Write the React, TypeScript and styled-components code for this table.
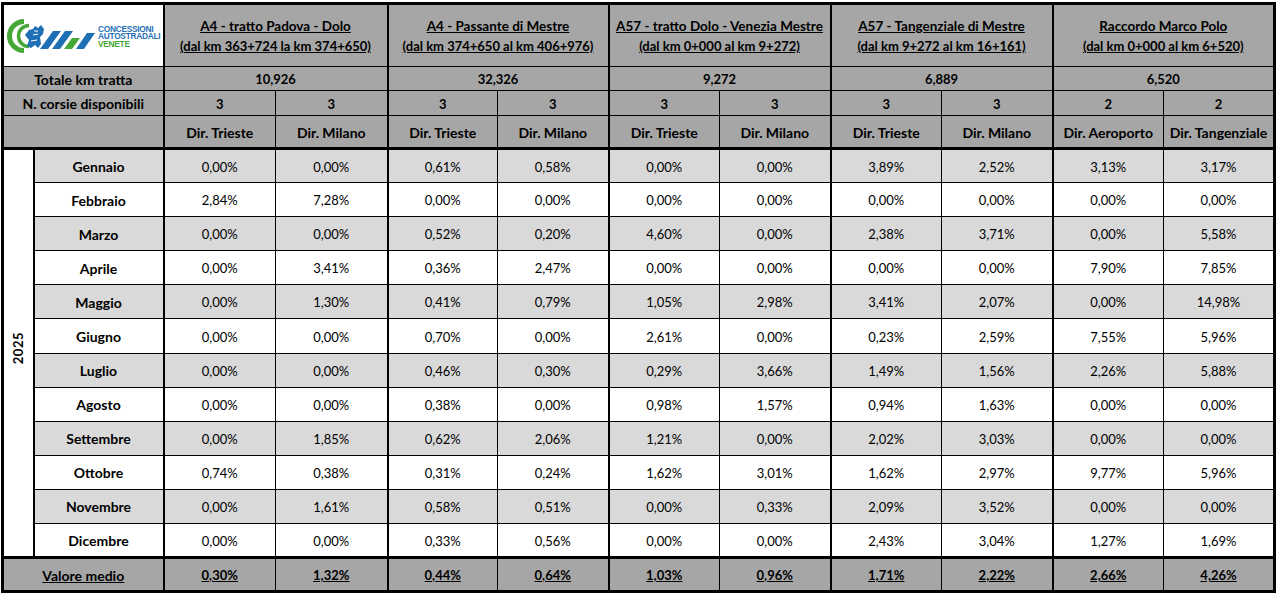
import React from "react";
import styled, { createGlobalStyle } from "styled-components";

const HEAD = "#a6a6a6";
const BAND = "#d9d9d9";
const BLUE = "#1f6fb5";
const GREEN = "#45a836";

const GlobalStyle = createGlobalStyle`
  body {
    margin: 0;
    background: #fff;
  }
`;

const Sheet = styled.table`
  border-collapse: collapse;
  table-layout: fixed;
  width: 1275px;
  margin: 2px 0 0 1px;
  border: 3px solid #000;
  font-family: Lato, "Liberation Sans", sans-serif;
  font-size: 13px;
  color: #000;
`;

const Col = styled.col<{ $w: number }>`
  width: ${p => p.$w}px;
`;

const Row = styled.tr<{ $h: number }>`
  height: ${p => p.$h}px;
`;

const Cell = styled.td<{
  $bg?: string;
  $bold?: boolean;
  $label?: boolean;
  $under?: boolean;
  $edge?: boolean;
  $lead?: boolean;
  $base?: boolean;
  $top?: boolean;
}>`
  padding: 1px 0 0;
  border: 1px solid #000;
  border-right-width: ${p => (p.$edge ? 2 : 1)}px;
  border-left-width: ${p => (p.$lead ? 2 : 1)}px;
  border-bottom-width: ${p => (p.$base ? 3 : 1)}px;
  border-top-width: ${p => (p.$top ? 3 : 1)}px;
  background: ${p => p.$bg ?? "#fff"};
  text-align: center;
  vertical-align: middle;
  font-size: ${p => (p.$label ? 14 : 13)}px;
  font-weight: ${p => (p.$bold || p.$label ? 700 : 400)};
  text-decoration: ${p => (p.$under ? "underline" : "none")};
  white-space: nowrap;
  overflow: hidden;
`;

const Title = styled.div<{ $wide?: boolean }>`
  font-size: ${p => (p.$wide ? 13.5 : 13)}px;
  font-weight: 700;
  line-height: 20px;
  text-decoration: underline;
`;

const YearLabel = styled.span`
  display: inline-block;
  writing-mode: vertical-rl;
  transform: rotate(180deg);
  font-weight: 700;
  letter-spacing: 0.5px;
  margin-bottom: 8px;
`;

const Brand = styled.div`
  display: flex;
  align-items: center;
  gap: 3px;
  padding: 0 0 0 3px;

  svg {
    flex-shrink: 0;
  }
`;

const BrandText = styled.div`
  display: flex;
  flex-direction: column;
  align-items: flex-start;
  font-family: "Liberation Sans", Arial, sans-serif;
  font-weight: 700;
  font-size: 8.3px;
  line-height: 7.6px;
  letter-spacing: -0.25px;
  padding-top: 2px;
`;

const BrandLine = styled.span<{ $green?: boolean }>`
  color: ${p => (p.$green ? GREEN : BLUE)};
`;

const Logo = () => (
  <Brand>
    <svg width="88" height="34" viewBox="0 0 88 34">
      <path d="M17 2.5 A14.5 14.5 0 0 0 17 31.5" stroke={GREEN} strokeWidth="5" fill="none" />
      <path d="M22 6.5 A10.5 10.5 0 0 0 22 27.5" stroke={GREEN} strokeWidth="3.5" fill="none" />
      <path
        d="M18 16 L22 11 L26 10 L28 7 L31 9 L34 6 L37 10 L36 15 L33 18 L34 25 L31 29 L28 26 L24 29 L20 27 L22 21 Z"
        fill={BLUE}
      />
      <path d="M27 12 L31 12 M26 16 L31 15 M24 22 L30 21" stroke="#fff" strokeWidth="1" />
      <polygon points="33,30 41,30 54,12 46,12" fill={BLUE} />
      <polygon points="45,30 53,30 66,12 58,12" fill={BLUE} />
      <polygon points="57,30 65,30 73,19 65,19" fill={GREEN} />
      <polygon points="69,30 77,30 88,14 80,14" fill={BLUE} />
    </svg>
    <BrandText>
      <BrandLine>CONCESSIONI</BrandLine>
      <BrandLine>AUTOSTRADALI</BrandLine>
      <BrandLine $green>VENETE</BrandLine>
    </BrandText>
  </Brand>
);

const widths = [31, 130, 112, 112, 110, 111, 111, 111, 111, 111, 111, 111];

const sections = [
  { name: "A4 - tratto Padova - Dolo", range: "(dal km 363+724 la km 374+650)", km: "10,926", lanes: ["3", "3"], dirs: ["Dir. Trieste", "Dir. Milano"] },
  { name: "A4 - Passante di Mestre", range: "(dal km 374+650 al km 406+976)", km: "32,326", lanes: ["3", "3"], dirs: ["Dir. Trieste", "Dir. Milano"] },
  { name: "A57 - tratto Dolo - Venezia Mestre", range: "(dal km 0+000 al km 9+272)", km: "9,272", lanes: ["3", "3"], dirs: ["Dir. Trieste", "Dir. Milano"] },
  { name: "A57 - Tangenziale di Mestre", range: "(dal km 9+272 al km 16+161)", km: "6,889", lanes: ["3", "3"], dirs: ["Dir. Trieste", "Dir. Milano"] },
  { name: "Raccordo Marco Polo", range: "(dal km 0+000 al km 6+520)", km: "6,520", lanes: ["2", "2"], dirs: ["Dir. Aeroporto", "Dir. Tangenziale"] },
];

const months: [string, string[]][] = [
  ["Gennaio", ["0,00", "0,00", "0,61", "0,58", "0,00", "0,00", "3,89", "2,52", "3,13", "3,17"]],
  ["Febbraio", ["2,84", "7,28", "0,00", "0,00", "0,00", "0,00", "0,00", "0,00", "0,00", "0,00"]],
  ["Marzo", ["0,00", "0,00", "0,52", "0,20", "4,60", "0,00", "2,38", "3,71", "0,00", "5,58"]],
  ["Aprile", ["0,00", "3,41", "0,36", "2,47", "0,00", "0,00", "0,00", "0,00", "7,90", "7,85"]],
  ["Maggio", ["0,00", "1,30", "0,41", "0,79", "1,05", "2,98", "3,41", "2,07", "0,00", "14,98"]],
  ["Giugno", ["0,00", "0,00", "0,70", "0,00", "2,61", "0,00", "0,23", "2,59", "7,55", "5,96"]],
  ["Luglio", ["0,00", "0,00", "0,46", "0,30", "0,29", "3,66", "1,49", "1,56", "2,26", "5,88"]],
  ["Agosto", ["0,00", "0,00", "0,38", "0,00", "0,98", "1,57", "0,94", "1,63", "0,00", "0,00"]],
  ["Settembre", ["0,00", "1,85", "0,62", "2,06", "1,21", "0,00", "2,02", "3,03", "0,00", "0,00"]],
  ["Ottobre", ["0,74", "0,38", "0,31", "0,24", "1,62", "3,01", "1,62", "2,97", "9,77", "5,96"]],
  ["Novembre", ["0,00", "1,61", "0,58", "0,51", "0,00", "0,33", "2,09", "3,52", "0,00", "0,00"]],
  ["Dicembre", ["0,00", "0,00", "0,33", "0,56", "0,00", "0,00", "2,43", "3,04", "1,27", "1,69"]],
];

const averages = ["0,30", "1,32", "0,44", "0,64", "1,03", "0,96", "1,71", "2,22", "2,66", "4,26"];

export default function App() {
  return (
    <>
      <GlobalStyle />
      <Sheet>
        <colgroup>
          {widths.map((w, i) => (
            <Col key={i} $w={w} />
          ))}
        </colgroup>
        <tbody>
          <Row $h={63}>
            <Cell colSpan={2} $edge>
              <Logo />
            </Cell>
            {sections.map(s => (
              <Cell key={s.name} colSpan={2} $bg={HEAD} $edge $lead>
                <Title $wide>{s.name}</Title>
                <Title>{s.range}</Title>
              </Cell>
            ))}
          </Row>
          <Row $h={24}>
            <Cell colSpan={2} $bg={HEAD} $label $edge>
              Totale km tratta
            </Cell>
            {sections.map(s => (
              <Cell key={s.name} colSpan={2} $bg={HEAD} $bold $edge>
                {s.km}
              </Cell>
            ))}
          </Row>
          <Row $h={25}>
            <Cell colSpan={2} $bg={HEAD} $label $edge>
              N. corsie disponibili
            </Cell>
            {sections.flatMap(s =>
              s.lanes.map((l, j) => (
                <Cell key={s.name + j} $bg={HEAD} $bold $edge={j === 1}>
                  {l}
                </Cell>
              ))
            )}
          </Row>
          <Row $h={33}>
            <Cell colSpan={2} $bg={HEAD} $edge $base />
            {sections.flatMap(s =>
              s.dirs.map((d, j) => (
                <Cell key={s.name + d} $bg={HEAD} $label $edge={j === 1} $base>
                  {d}
                </Cell>
              ))
            )}
          </Row>
          {months.map(([name, values], i) => {
            const bg = i % 2 === 0 ? BAND : "#fff";
            return (
              <Row key={name} $h={34.1}>
                {i === 0 && (
                  <Cell rowSpan={12} $edge>
                    <YearLabel>2025</YearLabel>
                  </Cell>
                )}
                <Cell $bg={bg} $label $lead $edge>
                  {name}
                </Cell>
                {values.map((v, j) => (
                  <Cell key={j} $bg={bg} $edge={j % 2 === 1}>
                    {v}%
                  </Cell>
                ))}
              </Row>
            );
          })}
          <Row $h={34}>
            <Cell colSpan={2} $bg={HEAD} $label $under $edge $top>
              Valore medio
            </Cell>
            {averages.map((v, j) => (
              <Cell key={j} $bg={HEAD} $bold $under $edge={j % 2 === 1} $top>
                {v}%
              </Cell>
            ))}
          </Row>
        </tbody>
      </Sheet>
    </>
  );
}
